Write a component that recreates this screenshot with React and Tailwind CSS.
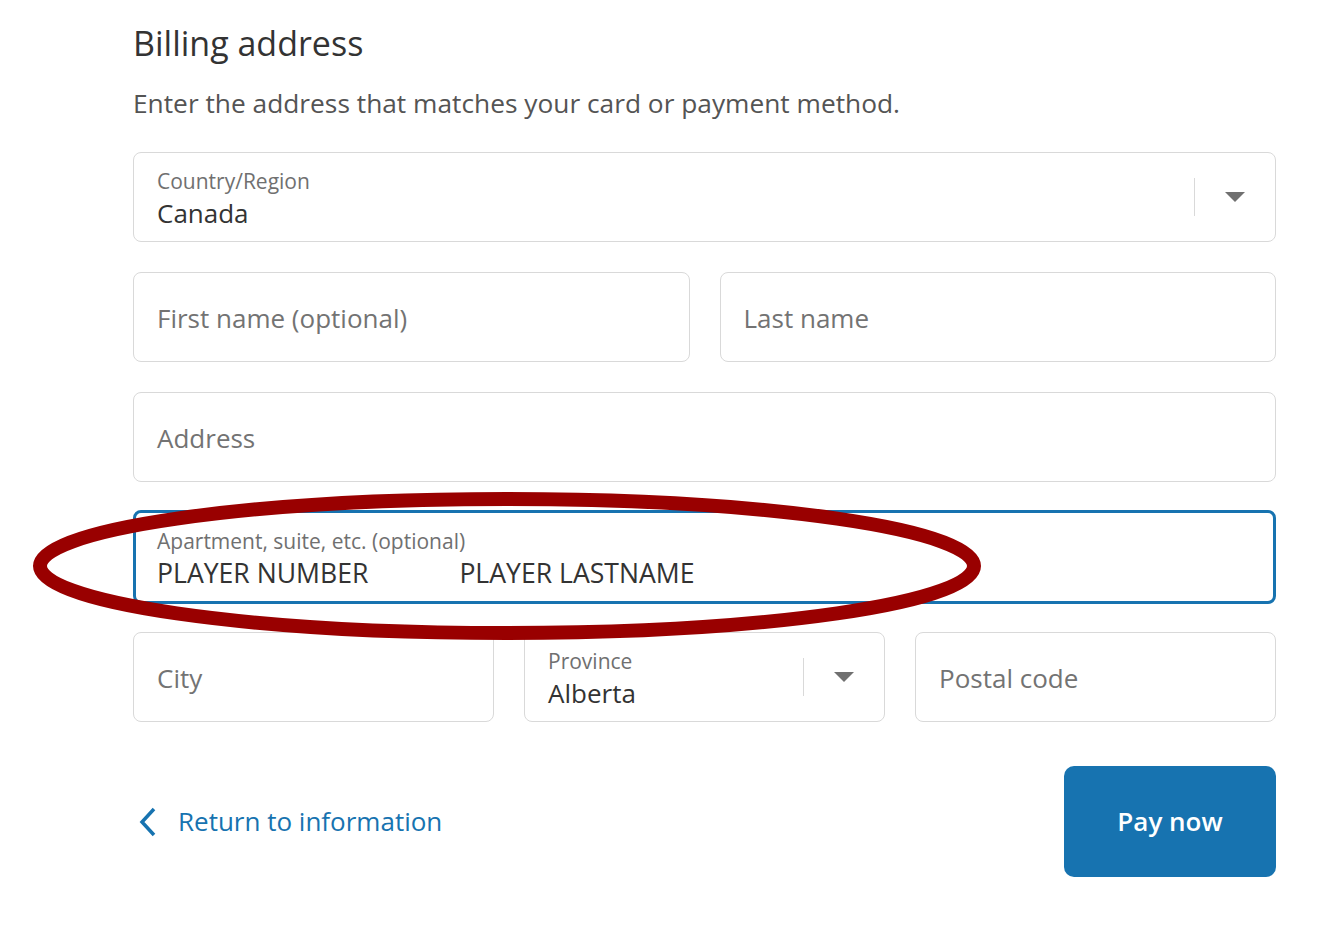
const FONT = { fontFamily: '"Open Sans", "Noto Sans", sans-serif' }

function Caret() {
  return (
    <div className="flex items-center h-full">
      <div className="w-px h-[38px] bg-[#d9d9d9]" />
      <svg width="20" height="10" viewBox="0 0 20 10" className="ml-[30px]">
        <path d="M0 0 L20 0 L10 10 Z" fill="#707070" />
      </svg>
    </div>
  )
}

function Field({ placeholder, label, children, select, focused, className = '' }) {
  return (
    <div
      className={`relative rounded-[8px] bg-white flex items-center pr-[30px] ${
        focused ? 'h-[94px] border-[3px] border-[#1773b0] pl-[21px]' : 'h-[90px] border border-[#d9d9d9] pl-[23px]'
      } ${className}`}
    >
      <div className="flex-1 min-w-0">
        {label ? (
          <div className="flex flex-col mt-[4px]">
            <span className="text-[21px] leading-[26px] text-[#707070]">{label}</span>
            <span className="mt-[2px] text-[26px] leading-[34px] text-[#333333] whitespace-nowrap">{children}</span>
          </div>
        ) : (
          <span className="block pt-[3px] text-[26px] text-[#737373]">{placeholder}</span>
        )}
      </div>
      {select && <Caret />}
    </div>
  )
}

export default function App() {
  return (
    <div className="relative w-[1325px] h-[947px] bg-white overflow-hidden" style={FONT}>
      <div className="ml-[133px] w-[1143px] pt-[18px]">
        <h2 className="text-[34px] leading-[50px] text-[#333333]">Billing address</h2>
        <p className="mt-[15px] text-[26.3px] leading-[40px] text-[#545454]">
          Enter the address that matches your card or payment method.
        </p>

        <div className="mt-[29px] flex flex-col gap-[30px]">
          <Field label="Country/Region" select>Canada</Field>
          <div className="grid grid-cols-2 gap-[30px]">
            <Field placeholder="First name (optional)" />
            <Field placeholder="Last name" />
          </div>
          <Field placeholder="Address" />
          <Field focused label="Apartment, suite, etc. (optional)" className="-my-[2px]">
            <span className="text-[26.6px]">PLAYER NUMBER</span>
            <span className="ml-[91px] text-[26.6px]">PLAYER LASTNAME</span>
          </Field>
          <div className="grid grid-cols-3 gap-[30px]">
            <Field placeholder="City" />
            <Field label="Province" select>Alberta</Field>
            <Field placeholder="Postal code" />
          </div>
        </div>

        <div className="mt-[44px] flex items-center justify-between">
          <a className="flex items-center text-[#1773b0] text-[26px]">
            <svg width="20" height="30" viewBox="0 0 20 30" className="ml-[4px]">
              <polyline points="17,2 5,15 17,28" fill="none" stroke="#1773b0" strokeWidth="3.5" />
            </svg>
            <span className="ml-[21px]">Return to information</span>
          </a>
          <button className="w-[212px] h-[111px] rounded-[10px] bg-[#1773b0] text-white text-[26px] font-semibold">
            Pay now
          </button>
        </div>
      </div>

      {/* annotation */}
      <svg className="absolute left-0 top-0 pointer-events-none" width="1325" height="947">
        <ellipse cx="507" cy="566" rx="467" ry="67" fill="none" stroke="#990000" strokeWidth="14" />
      </svg>
    </div>
  )
}
